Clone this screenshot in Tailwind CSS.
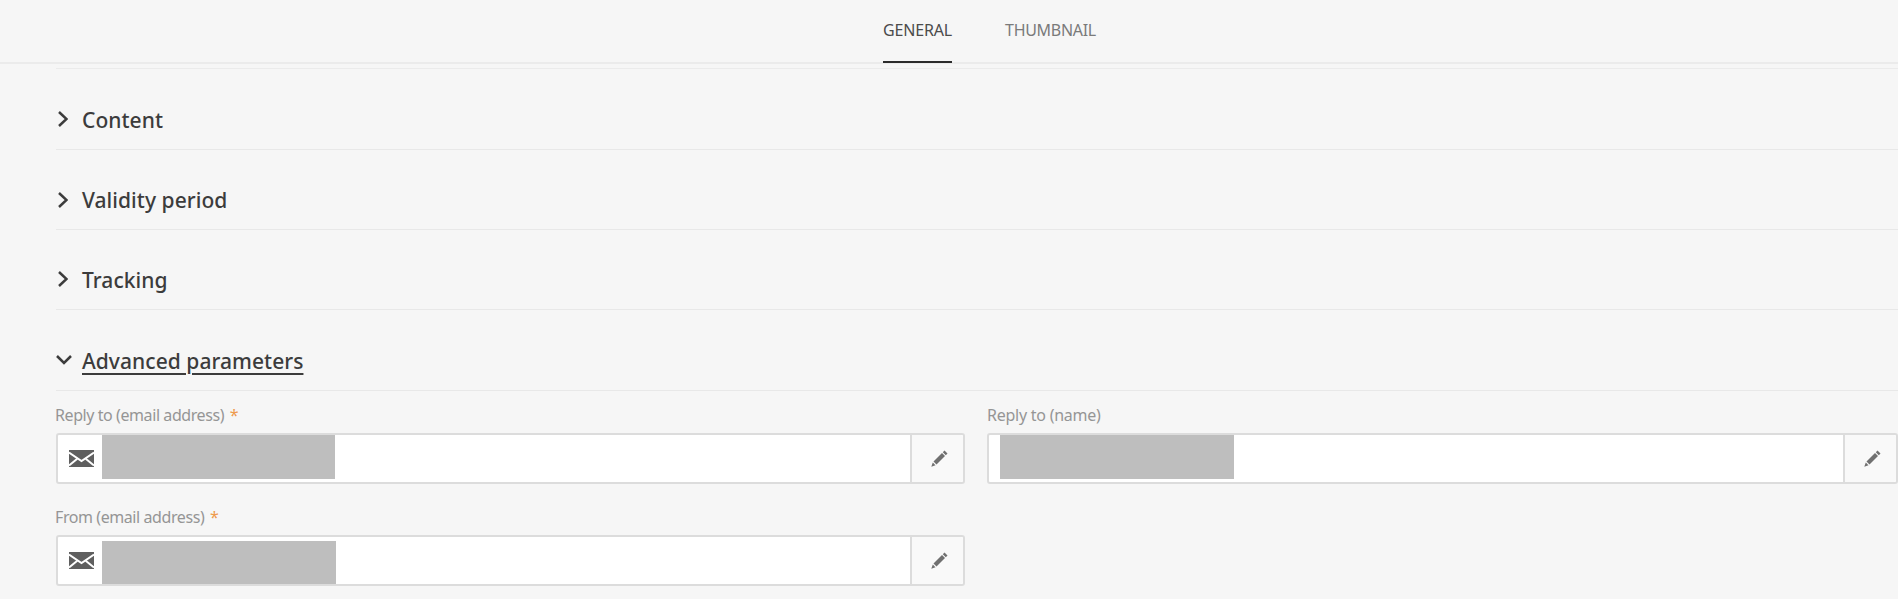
<!DOCTYPE html>
<html lang="en">
<head>
  <meta charset="UTF-8">
  <title>Delivery properties</title>
  <script src="https://cdn.jsdelivr.net/npm/@tailwindcss/browser@4"></script>
</head>
<body class="bg-[#f6f6f6] h-[599px] overflow-hidden font-['Noto_Sans',sans-serif]">
  <!-- Tabs -->
  <div class="h-[64px] border-b-2 border-[#ebebeb] pl-[883px]">
    <div class="flex gap-[53px]">
      <div class="w-[69px] h-[63px] border-b-2 border-[#2c2c2c] text-center text-[16px] tracking-[-0.2px] leading-[60px] text-[#4b4b4b] whitespace-nowrap">GENERAL</div>
      <div class="w-[91px] h-[63px] text-center text-[16px] tracking-[-0.3px] leading-[60px] text-[#7a7a7a] whitespace-nowrap">THUMBNAIL</div>
    </div>
  </div>

  <div class="pl-[56px]">
    <div class="h-[5px] border-b border-[#ebebeb]"></div>

    <!-- Sections -->
    <div class="h-[81px] border-b border-[#e8e8e8] flex items-center gap-[14px] pt-[23px]">
      <svg class="w-[12px] h-[16px] mb-[3px] text-[#3c3c3c]" viewBox="0 0 12 16" fill="none" stroke="currentColor" stroke-width="2.500"><path d="M3 1l7.500 7-7.500 7"/></svg>
      <span class="text-[21px] font-medium tracking-[0.05px] text-[#3c3c3c]">Content</span>
    </div>
    <div class="h-[80px] border-b border-[#e8e8e8] flex items-center gap-[14px] pt-[23px]">
      <svg class="w-[12px] h-[16px] mb-[3px] text-[#3c3c3c]" viewBox="0 0 12 16" fill="none" stroke="currentColor" stroke-width="2.500"><path d="M3 1l7.500 7-7.500 7"/></svg>
      <span class="text-[21px] font-medium tracking-[0.05px] text-[#3c3c3c]">Validity period</span>
    </div>
    <div class="h-[80px] border-b border-[#e8e8e8] flex items-center gap-[14px] pt-[22px]">
      <svg class="w-[12px] h-[16px] mb-[3px] text-[#3c3c3c]" viewBox="0 0 12 16" fill="none" stroke="currentColor" stroke-width="2.500"><path d="M3 1l7.500 7-7.500 7"/></svg>
      <span class="text-[21px] font-medium tracking-[0.05px] text-[#3c3c3c]">Tracking</span>
    </div>
    <div class="h-[81px] border-b border-[#e8e8e8] flex items-center gap-[10px] pt-[23px]">
      <svg class="w-[16px] h-[10px] mb-[3px] text-[#3c3c3c]" viewBox="0 0 16 10" fill="none" stroke="currentColor" stroke-width="2.500"><path d="M1 1l7 7 7-7"/></svg>
      <span class="text-[21px] font-medium tracking-[0.05px] text-[#3c3c3c] underline underline-offset-[4px] decoration-[1.5px]">Advanced parameters</span>
    </div>

    <!-- Fields -->
    <div class="grid grid-cols-[909px_911px] gap-x-[22px] pt-[14px]">
      <div>
        <label class="block h-[28px] -ml-[1px] text-[16px] tracking-[-0.42px] leading-[21px] text-[#959595]">Reply to (email address) <span class="text-[#ee9a4d] ml-[2px]">*</span></label>
        <div class="h-[51px] flex bg-white border-2 border-[#dcdcdc] rounded-[3px]">
          <div class="w-[44px] flex items-center justify-center pl-[2px]">
            <svg class="w-[25px] h-[17px]" viewBox="0 0 25 17"><rect width="25" height="17" fill="#5f5f5f"/><path d="M0 2.500l12.500 8.500 12.500-8.500M0 15.500l8-6.500M25 15.500l-8-6.500" fill="none" stroke="#fff" stroke-width="2"/></svg>
          </div>
          <div class="w-[233px] h-[44px] bg-[#bebebe]"></div>
          <div class="flex-1"></div>
          <div class="w-[53px] pl-[3px] border-l-2 border-[#dcdcdc] bg-[#f9f9f9] rounded-r-[3px] flex items-center justify-center">
            <svg class="w-[17px] h-[17px] text-[#707070]" viewBox="0 0 17 17" fill="currentColor"><path d="M13.500 0.500l3 3-1.700 1.700-3-3z"/><path d="M11 3l3 3-8.500 8.500-3-3z"/><path d="M1.800 12.500l2.700 2.700-4.200 1.500z"/></svg>
          </div>
        </div>
      </div>
      <div>
        <label class="block h-[28px] text-[16px] tracking-[-0.25px] leading-[21px] text-[#959595]">Reply to (name)</label>
        <div class="h-[51px] flex bg-white border-2 border-[#dcdcdc] rounded-[3px]">
          <div class="w-[234px] h-[44px] ml-[11px] bg-[#bebebe]"></div>
          <div class="flex-1"></div>
          <div class="w-[53px] pl-[3px] border-l-2 border-[#dcdcdc] bg-[#f9f9f9] rounded-r-[3px] flex items-center justify-center">
            <svg class="w-[17px] h-[17px] text-[#707070]" viewBox="0 0 17 17" fill="currentColor"><path d="M13.500 0.500l3 3-1.700 1.700-3-3z"/><path d="M11 3l3 3-8.500 8.500-3-3z"/><path d="M1.800 12.500l2.700 2.700-4.200 1.500z"/></svg>
          </div>
        </div>
      </div>
      <div class="mt-[23px]">
        <label class="block h-[28px] -ml-[1px] text-[16px] tracking-[-0.42px] leading-[21px] text-[#959595]">From (email address) <span class="text-[#ee9a4d] ml-[2px]">*</span></label>
        <div class="h-[51px] flex bg-white border-2 border-[#dcdcdc] rounded-[3px]">
          <div class="w-[44px] flex items-center justify-center pl-[2px]">
            <svg class="w-[25px] h-[17px]" viewBox="0 0 25 17"><rect width="25" height="17" fill="#5f5f5f"/><path d="M0 2.500l12.500 8.500 12.500-8.500M0 15.500l8-6.500M25 15.500l-8-6.500" fill="none" stroke="#fff" stroke-width="2"/></svg>
          </div>
          <div class="w-[234px] h-[43px] mt-[4px] bg-[#bebebe]"></div>
          <div class="flex-1"></div>
          <div class="w-[53px] pl-[3px] border-l-2 border-[#dcdcdc] bg-[#f9f9f9] rounded-r-[3px] flex items-center justify-center">
            <svg class="w-[17px] h-[17px] text-[#707070]" viewBox="0 0 17 17" fill="currentColor"><path d="M13.500 0.500l3 3-1.700 1.700-3-3z"/><path d="M11 3l3 3-8.500 8.500-3-3z"/><path d="M1.800 12.500l2.700 2.700-4.200 1.500z"/></svg>
          </div>
        </div>
      </div>
    </div>
  </div>
</body>
</html>
